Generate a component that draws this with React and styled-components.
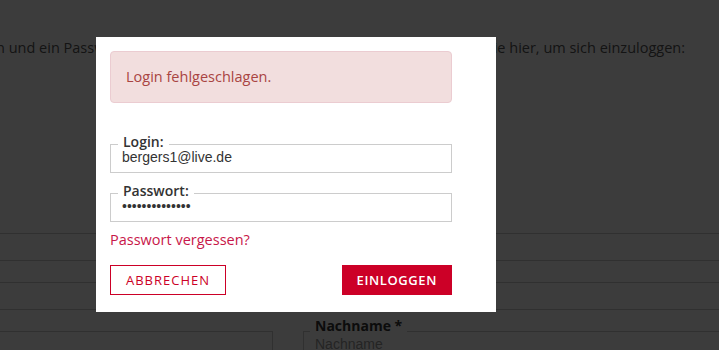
import React from 'react';
import styled, { createGlobalStyle } from 'styled-components';

const red = '#cc0027';

const GlobalStyle = createGlobalStyle`
  html, body {
    margin: 0;
    background: #fff;
    overflow: hidden;
  }
  body {
    font-family: 'Open Sans', 'Liberation Sans', sans-serif;
    color: #555;
  }
  * {
    box-sizing: border-box;
  }
`;

// page behind the dialog
const Page = styled.div`
  position: relative;
  height: 350px;
  overflow: hidden;
  padding-top: 38px;
`;

const Intro = styled.p`
  display: flex;
  justify-content: space-between;
  margin: 0 34px 0 -4px;
  font-size: 14.5px;
  line-height: 19px;
  white-space: nowrap;
`;

const BackForm = styled.div`
  display: flex;
  flex-direction: column;
  gap: 21px;
  margin: 176px -10px 0;
`;

const BackBox = styled.div`
  height: 28px;
  border: 1px solid #ccc;
  margin-top: ${(props) => props.$offset || 0}px;
`;

const BackRow = styled.div`
  display: grid;
  grid-template-columns: 283px 1fr;
  column-gap: 30px;
  align-items: start;
  margin-top: -12px;
`;

const BackField = styled.fieldset`
  margin: 0;
  padding: 0 8px 6px 6px;
  border: 1px solid #ccc;
  border-bottom: 0;
  min-width: 0;
`;

const BackLegend = styled.legend`
  padding: 0 5px 10px;
  font-weight: 700;
  font-size: 14px;
  line-height: 14px;
  color: #333;
`;

const BackInput = styled.input`
  display: block;
  width: 100%;
  margin-top: -7px;
  padding: 0 5px;
  border: 0;
  background: transparent;
  font-family: 'Liberation Sans', Arial, sans-serif;
  font-size: 14px;
  line-height: 17px;

  &::placeholder {
    color: #999;
  }
`;

// dialog
const Overlay = styled.div`
  position: absolute;
  inset: 0;
  background: rgba(0, 0, 0, 0.765);
  padding: 37px 0 0 96px;
`;

const Modal = styled.div`
  width: 400px;
  background: #fff;
  padding: 14px 44px 17px 14px;
`;

const Alert = styled.div`
  padding: 15px;
  border: 1px solid #ebccd1;
  border-radius: 4px;
  background: #f2dede;
  color: #a94442;
  font-size: 14.5px;
  font-weight: 500;
  line-height: 20px;
  margin-bottom: 32px;
`;

const Field = styled.fieldset`
  margin: ${(props) => (props.$spaced ? '11px' : '0')} 0 0;
  padding: 0 8px 6px 7px;
  border: 1px solid #ccc;
  min-width: 0;
`;

const Legend = styled.legend`
  padding: 0 5px 5px;
  font-weight: 600;
  font-size: 14px;
  line-height: 14px;
  color: #333;
`;

const Input = styled.input`
  display: block;
  width: 100%;
  margin-top: -5px;
  padding: 0 4px;
  border: 0;
  outline: none;
  background: transparent;
  color: #333;
  font-family: 'Liberation Sans', Arial, sans-serif;
  font-size: 14px;
  line-height: 17px;
`;

const Forgot = styled.a`
  display: block;
  margin-top: 8px;
  color: #c8174a;
  font-size: 14.5px;
  line-height: 20px;
  text-decoration: none;
  cursor: pointer;
`;

const Actions = styled.div`
  display: flex;
  justify-content: space-between;
  margin-top: 15px;
`;

const Button = styled.button`
  height: 30px;
  padding: 0 ${(props) => (props.$primary ? 14 : 15)}px;
  border: 1px solid ${red};
  border-radius: 0;
  background: ${(props) => (props.$primary ? red : '#fff')};
  color: ${(props) => (props.$primary ? '#fff' : red)};
  font-family: 'Open Sans', 'Liberation Sans', sans-serif;
  font-size: 13px;
  font-weight: ${(props) => (props.$primary ? 600 : 400)};
  letter-spacing: ${(props) => (props.$primary ? 0.6 : 1)}px;
  text-transform: uppercase;
  cursor: pointer;
`;

const App = () => {
  return (
    <>
      <GlobalStyle />
      <Page>
        <Intro>
          <span>n und ein Passwort an.</span>
          <span>Klicken Sie hier, um sich einzuloggen:</span>
        </Intro>
        <BackForm>
          <BackBox />
          <BackBox />
          <BackRow>
            <BackBox $offset={12} />
            <BackField>
              <BackLegend>Nachname *</BackLegend>
              <BackInput placeholder="Nachname" readOnly />
            </BackField>
          </BackRow>
        </BackForm>

        <Overlay>
          <Modal>
            <Alert>Login fehlgeschlagen.</Alert>
            <Field>
              <Legend>Login:</Legend>
              <Input type="text" defaultValue="bergers1@live.de" />
            </Field>
            <Field $spaced>
              <Legend>Passwort:</Legend>
              <Input type="password" defaultValue="geheimespasswo" />
            </Field>
            <Forgot>Passwort vergessen?</Forgot>
            <Actions>
              <Button>Abbrechen</Button>
              <Button $primary>Einloggen</Button>
            </Actions>
          </Modal>
        </Overlay>
      </Page>
    </>
  );
};

export default App;
